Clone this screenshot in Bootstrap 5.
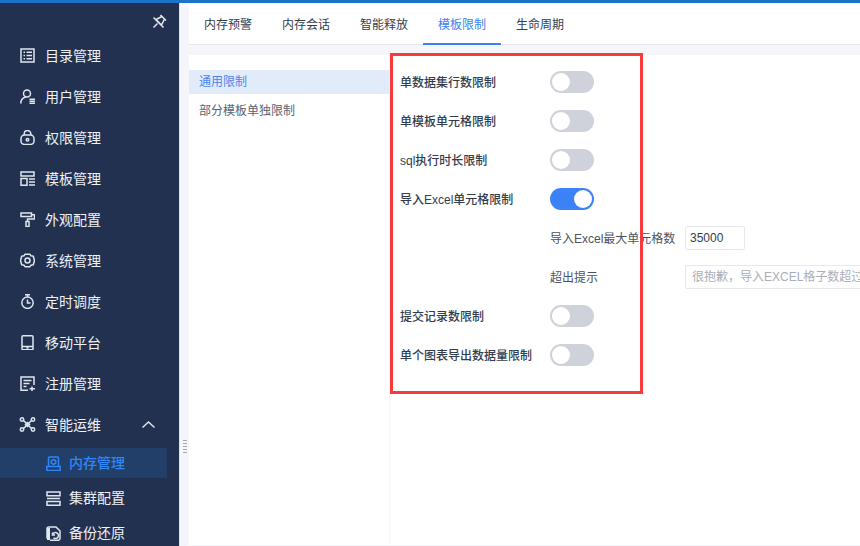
<!DOCTYPE html>
<html lang="zh">
<head>
<meta charset="utf-8">
<title>内存管理</title>
<link href="https://cdn.jsdelivr.net/npm/bootstrap@5.3.0/dist/css/bootstrap.min.css" rel="stylesheet">
<style>
html,body{height:546px;overflow:hidden}
body{font-family:"Liberation Sans","Noto Sans CJK SC",sans-serif;font-size:12px;color:#333c4d;background:#f5f6f9}
.topline{height:3px;background:#1a73c7}
.shell{height:543px;position:relative}
.sidebar{width:179px;background:#22314f;color:#eef1f6;flex:none;overflow:hidden}
.pin{height:32px;padding:11px 12px 0 0;flex:none}
.menu-row{height:41px;padding-left:20px;font-size:14px;gap:10px;line-height:1;flex:none}
.menu-row svg,.sub-row svg{width:15px;height:15px;flex:none;fill:none;stroke:#dfe6f0;stroke-width:1.5}
.sub-row{height:35px;padding-left:46px;font-size:14px;gap:8px;width:167px;flex:none}
.sub-row.on{height:30px;background:#223f69;color:#2f86f6;margin:3px 0;font-weight:500}
.sub-row.on svg{stroke:#2f86f6}
.menu-row svg.chev{margin-left:auto;margin-right:23px}
.divider{width:10px;flex:none;background:#f5f6f9;border-left:1px solid #dfe3ea;position:relative}
.grip{position:absolute;left:3px;top:436px;width:4px;height:14px;background-image:radial-gradient(#a5a8ae .7px,transparent .8px);background-size:2px 3px}
.tabbar{height:42px;background:#fff;border-bottom:1px solid #e6e8ee;padding-left:10px;margin-left:-10px}
.tabitem{height:42px;padding:0 15px;line-height:44px;color:#333c4d;margin-bottom:-1px}
.tabitem.on{color:#3b82f6;border-bottom:2px solid #3b82f6}
.panes{padding-top:10px;gap:1px;height:500px}
.leftpane{width:200px;background:#fff;padding-top:15px;flex:none}
.leftitem{height:24px;line-height:24px;padding-left:10px;color:#5a6272;margin-bottom:5px}
.leftitem.on{background:#e1ebfa;color:#4a86f0}
.rightpane{background:#fff;flex:1;padding-top:7px;min-width:0;overflow:hidden}
.opt{height:39px}
.opt-label{width:160px;padding:2px 0 0 10px;font-weight:500;color:#333c4d;flex:none}
.tog{width:44px;height:22px;border-radius:11px;background:#cfd2da;position:relative;flex:none}
.tog::after{content:"";position:absolute;left:2px;top:2px;width:18px;height:18px;border-radius:50%;background:#fff}
.tog.on{background:#3b82f6}
.tog.on::after{left:24px}
.sub-label{width:135px;margin-left:160px;padding-top:2px;flex:none;color:#4b5363}
.boxed{height:24px;border:1px solid #e6e8ee;border-radius:2px;line-height:22px;background:#fff;flex:none}
.num{width:60px;padding:0 4px;color:#333c4d}
.hint{width:400px;padding:0 6px;color:#a9aeb8;white-space:nowrap}
.redbox{position:absolute;left:390px;top:50px;width:253px;height:341px;border:3px solid #f73b3b;pointer-events:none}
</style>
</head>
<body>
<div class="topline"></div>
<div class="shell d-flex">
  <nav class="sidebar d-flex flex-column">
    <div class="pin d-flex justify-content-end">
      <svg width="15" height="15" viewBox="0 0 15 15" fill="none" stroke="#e4e9f1" stroke-width="1.5"><path d="M8.500 1l5.500 5.500M10 2.500L4 5.500l5.500 5.500 3-6M1.500 3.500l10 10M5.500 9.500L1.500 13.500"/></svg>
    </div>
    <div class="menu-row d-flex align-items-center"><svg viewBox="0 0 15 15"><rect x="1" y="1" width="13" height="13"/><path d="M3.500 4.300h1.500M6.500 4.300h5.500M3.500 7.500h1.500M6.500 7.500h5.500M3.500 10.700h1.500M6.500 10.700h5.500"/></svg><span>目录管理</span></div>
    <div class="menu-row d-flex align-items-center"><svg viewBox="0 0 15 15"><circle cx="7" cy="4.500" r="3.500"/><path d="M.8 14.500c0-4 2.700-6 5-6.500M9.500 10.200h5.500M9.500 12.200h5.500M9.500 14.200h5.500"/></svg><span>用户管理</span></div>
    <div class="menu-row d-flex align-items-center"><svg viewBox="0 0 15 15"><rect x="1" y="5" width="13" height="9.500" rx="3.500"/><path d="M4.200 5V3.800a3.300 3.300 0 0 1 6.600 0V5"/><circle cx="7.500" cy="9.800" r="1.300"/></svg><span>权限管理</span></div>
    <div class="menu-row d-flex align-items-center"><svg viewBox="0 0 15 15"><path d="M1 1h13v4H1zM1 7.500h6v6.800H1zM9 8h6M9 11h6M9 14h6"/></svg><span>模板管理</span></div>
    <div class="menu-row d-flex align-items-center"><svg viewBox="0 0 15 15"><path d="M1 1h10.500v3.500H1zM11.500 2.700H14.500V7H7.500v2.500M6 9.500h3V14.500H6z"/></svg><span>外观配置</span></div>
    <div class="menu-row d-flex align-items-center"><svg viewBox="0 0 15 15"><path d="M5 1.300h5l1 1.500 2.300.5 1.200 4.200-1.200 4.200-2.300.5-1 1.500H5l-1-1.500-2.300-.5L.5 7.500l1.200-4.200L4 2.800z" stroke-linejoin="round"/><circle cx="7.500" cy="7.500" r="2.500"/></svg><span>系统管理</span></div>
    <div class="menu-row d-flex align-items-center"><svg viewBox="0 0 15 15"><circle cx="7.500" cy="8.700" r="5.700"/><path d="M5 .8h5M7.500 .8v2.200M7.500 5.500v3.500h3"/></svg><span>定时调度</span></div>
    <div class="menu-row d-flex align-items-center"><svg viewBox="0 0 15 15"><rect x="2" y=".8" width="11" height="14" rx="1"/><path d="M2 11.500h11M6.500 13h2" stroke-width="1.300"/></svg><span>移动平台</span></div>
    <div class="menu-row d-flex align-items-center"><svg viewBox="0 0 15 15"><path d="M8 14.200H1V1h13v8M3.500 4.500h8M3.500 7.500h6M3.500 10.500h3M12 10.500v4.500M9.500 12.700H15"/></svg><span>注册管理</span></div>
    <div class="menu-row d-flex align-items-center"><svg viewBox="0 0 15 15" style="overflow:visible"><path d="M3 3l9 9M12 3l-9 9"/><path d="M7.500 5.500l2 2-2 2-2-2z"/><circle cx="2" cy="2.500" r="1.700"/><circle cx="13" cy="2.500" r="1.700"/><circle cx="2" cy="12.500" r="1.700"/><circle cx="13" cy="12.500" r="1.700"/></svg><span>智能运维</span>
      <svg class="chev" viewBox="0 0 15 15"><path d="M1.500 10.500l6-5.500 6 5.500"/></svg></div>
    <div class="sub-row on d-flex align-items-center"><svg viewBox="0 0 15 15"><path d="M2.500 10V2a1 1 0 0 1 1-1h8a1 1 0 0 1 1 1v8M.8 10.500h13.400v4H.8z"/><path d="M7.500 3.500l2.200 1.300v2.400L7.500 8.500 5.300 7.200V4.800z"/></svg><span>内存管理</span></div>
    <div class="sub-row d-flex align-items-center"><svg viewBox="0 0 15 15"><path d="M1 1h13v3.800H1zM1 10.500h13v3.800H1zM1 7.600h13"/></svg><span>集群配置</span></div>
    <div class="sub-row d-flex align-items-center"><svg viewBox="0 0 15 15"><path d="M4 14.300h8a2 2 0 0 0 2-2V5l-4-4H3a2 2 0 0 0-2 2v9.500"/><path d="M2.500 2v12" stroke-width="3"/><path d="M6.500 8.800a3 3 0 1 1 1 3M6.500 6.500v2.500h2.500"/></svg><span>备份还原</span></div>
  </nav>
  <div class="divider"><span class="grip"></span></div>
  <main class="flex-grow-1" style="min-width:0">
    <div class="tabbar d-flex">
      <div class="tabitem">内存预警</div>
      <div class="tabitem">内存会话</div>
      <div class="tabitem">智能释放</div>
      <div class="tabitem on">模板限制</div>
      <div class="tabitem">生命周期</div>
    </div>
    <div class="panes d-flex">
      <div class="leftpane">
        <div class="leftitem on">通用限制</div>
        <div class="leftitem">部分模板单独限制</div>
      </div>
      <div class="rightpane">
        <div class="opt d-flex align-items-center"><span class="opt-label">单数据集行数限制</span><span class="tog"></span></div>
        <div class="opt d-flex align-items-center"><span class="opt-label">单模板单元格限制</span><span class="tog"></span></div>
        <div class="opt d-flex align-items-center"><span class="opt-label">sql执行时长限制</span><span class="tog"></span></div>
        <div class="opt d-flex align-items-center"><span class="opt-label">导入Excel单元格限制</span><span class="tog on"></span></div>
        <div class="opt d-flex align-items-center"><span class="sub-label">导入Excel最大单元格数</span><span class="boxed num">35000</span></div>
        <div class="opt d-flex align-items-center"><span class="sub-label">超出提示</span><span class="boxed hint">很抱歉，导入EXCEL格子数超过限制</span></div>
        <div class="opt d-flex align-items-center"><span class="opt-label">提交记录数限制</span><span class="tog"></span></div>
        <div class="opt d-flex align-items-center"><span class="opt-label">单个图表导出数据量限制</span><span class="tog"></span></div>
      </div>
    </div>
  </main>
  <div class="redbox"></div>
</div>
<script src="https://cdn.jsdelivr.net/npm/bootstrap@5.3.0/dist/js/bootstrap.bundle.min.js"></script>
</body>
</html>
